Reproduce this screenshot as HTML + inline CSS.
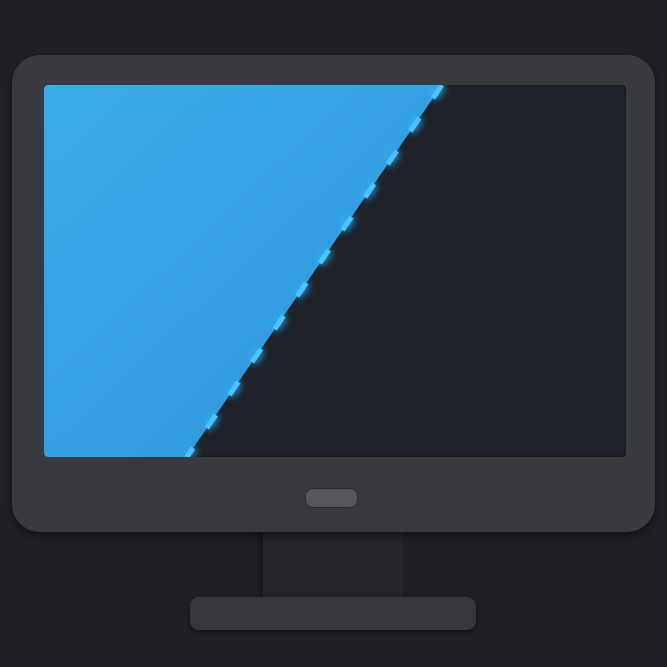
<!DOCTYPE html>
<html><head><style>
body{margin:0;width:667px;height:667px;background:#1f2125;overflow:hidden;position:relative}
div{position:absolute;box-sizing:border-box}
</style></head><body>
<div style="left:263px;top:525px;width:140px;height:75px;background:#24262a;box-shadow:-3px 0 6px rgba(0,0,0,.4)"></div>
<div style="left:190px;top:597px;width:286px;height:33px;background:#35373b;border-radius:9px;box-shadow:0 3px 6px rgba(0,0,0,.5)"></div>
<div style="left:12px;top:55px;width:643px;height:477px;background:#383a3f;border-radius:28px;box-shadow:0 4px 10px rgba(0,0,0,.5)"></div>
<div style="left:44px;top:85px;width:582px;height:372px;background:#1f2228;border-radius:4px;overflow:hidden;box-shadow:inset 0 0 3px rgba(0,0,0,.6)">
<svg width="582" height="372" style="position:absolute;left:0;top:0">
<defs><filter id="g" x="-50%" y="-50%" width="200%" height="200%"><feGaussianBlur stdDeviation="4"/></filter>
<linearGradient id="b" x1="0" y1="0" x2="1" y2="1"><stop offset="0" stop-color="#3badea"/><stop offset="1" stop-color="#2e93da"/></linearGradient></defs>
<polygon points="0,0 398,0 143,372 0,372" fill="url(#b)"/>
<line x1="398" y1="0" x2="143" y2="372" stroke="#2ab0ff" stroke-width="8" stroke-dasharray="16 24" filter="url(#g)" opacity=".9"/>
<line x1="398" y1="0" x2="143" y2="372" stroke="#4cc3ff" stroke-width="5" stroke-dasharray="16 24"/>
</svg></div>
<div style="left:305px;top:488px;width:53px;height:20px;background:#55575b;border-radius:8px;border:1px solid #2a2c30"></div>
</body></html>
